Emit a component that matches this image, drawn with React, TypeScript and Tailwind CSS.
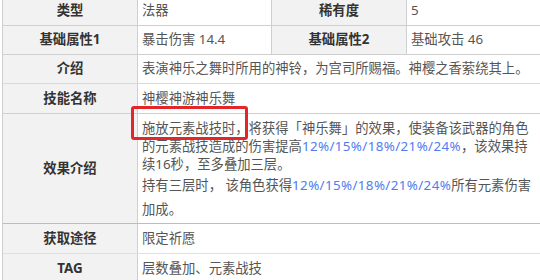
import React from "react";

const font = {
  fontFamily: '"Noto Sans", "Noto Sans CJK SC", sans-serif',
};

function Label({ children, w = "w-[135px]" }: { children: React.ReactNode; w?: string }) {
  return (
    <div
      className={`${w} shrink-0 bg-[#f2f2f2] border-r border-[#cfcfcf] flex items-center justify-center font-bold text-[#333]`}
    >
      {children}
    </div>
  );
}

function Value({ children, className = "" }: { children: React.ReactNode; className?: string }) {
  return <div className={`flex items-center pl-[4px] text-[#555] ${className}`}>{children}</div>;
}

const Pct = () => <span className="text-[#4f7cf0] tracking-[0.4px]">12%/15%/18%/21%/24%</span>;

export default function App() {
  return (
    <div className="relative w-[540px] h-[280px] overflow-hidden bg-white" style={font}>
      <div className="ml-[2px] -mt-[4px] w-[540px] border-l border-[#cfcfcf] text-[13.33px]">
        <div className="flex h-[30px] border-b border-[#cfcfcf]">
          <Label>类型</Label>
          <Value className="w-[134px] shrink-0 border-r border-[#cfcfcf]">法器</Value>
          <Label>稀有度</Label>
          <Value className="flex-1">5</Value>
        </div>
        <div className="flex h-[29px] border-b border-[#cfcfcf]">
          <Label>基础属性1</Label>
          <Value className="w-[134px] shrink-0 border-r border-[#cfcfcf]">暴击伤害 14.4</Value>
          <Label>基础属性2</Label>
          <Value className="flex-1">基础攻击 46</Value>
        </div>
        <div className="flex h-[29px] border-b border-[#d9d9d9]">
          <Label>介绍</Label>
          <Value className="flex-1">表演神乐之舞时所用的神铃，为宫司所赐福。神樱之香萦绕其上。</Value>
        </div>
        <div className="flex h-[30px] border-b border-[#cfcfcf]">
          <Label>技能名称</Label>
          <Value className="flex-1">神樱神游神乐舞</Value>
        </div>
        <div className="flex h-[110px] border-b border-[#bdbdbd]">
          <Label>效果介绍</Label>
          <div className="flex-1 pl-[4px] pr-[8px] pt-[5px] text-[#555]">
            <p className="leading-[18px]">
              施放元素战技时，将获得「神乐舞」的效果，使装备该武器的角色的元素战技造成的伤害提高
              <Pct />
              ，该效果持续16秒，至多叠加三层。
            </p>
            <p className="leading-[24px]">
              持有三层时， 该角色获得
              <Pct />
              所有元素伤害加成。
            </p>
          </div>
        </div>
        <div className="flex h-[30px] border-b border-[#e0e0e0]">
          <Label>获取途径</Label>
          <Value className="flex-1">限定祈愿</Value>
        </div>
        <div className="flex h-[30px] border-b border-[#cfcfcf]">
          <Label>TAG</Label>
          <Value className="flex-1">层数叠加、元素战技</Value>
        </div>
      </div>
      {/* highlight box drawn over the opening clause */}
      <div className="absolute left-[131px] top-[106px] w-[117px] h-[34px] border-[3px] border-[#e3262a] rounded-[3px]" />
    </div>
  );
}
